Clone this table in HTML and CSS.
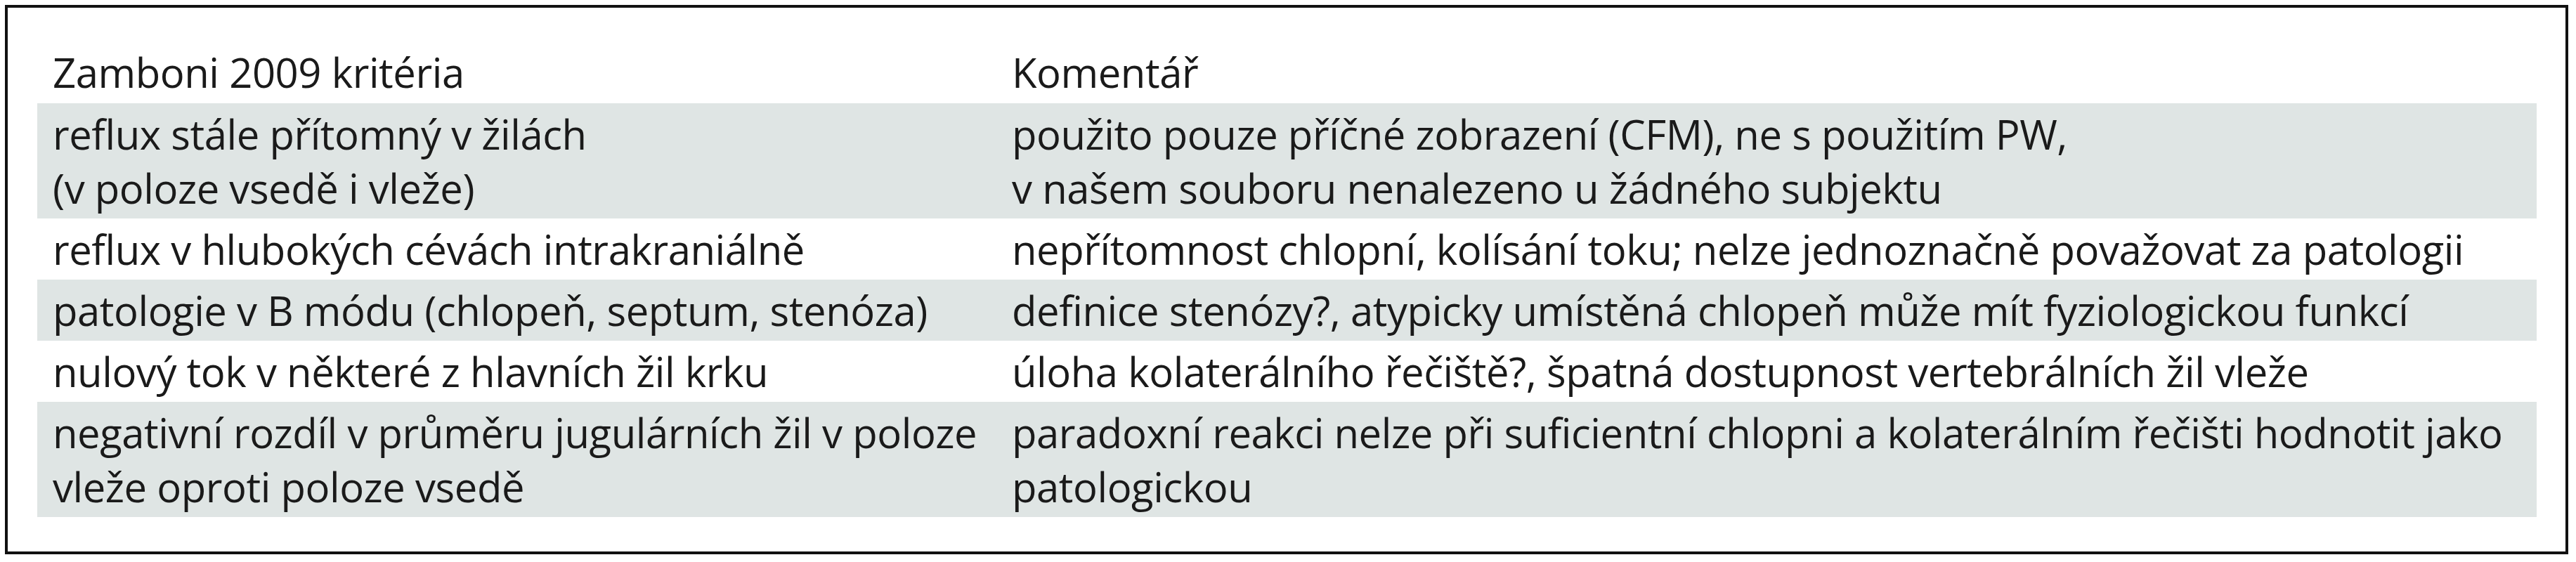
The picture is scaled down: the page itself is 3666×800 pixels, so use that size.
FILE: index.html
```html
<!DOCTYPE html>
<html lang="cs">
<head>
<meta charset="utf-8">
<title>Zamboni 2009 kritéria</title>
<link rel="stylesheet" href="styles.css">
</head>
<body>
<div class="frame">
  <table class="criteria">
    <thead>
      <tr>
        <th class="col-a">Zamboni 2009 kritéria</th>
        <th class="col-b">Komentář</th>
      </tr>
    </thead>
    <tbody>
      <tr class="shade">
        <td>reflux stále přítomný v žilách<br>(v poloze vsedě i vleže)</td>
        <td>použito pouze příčné zobrazení (CFM), ne s použitím PW,<br>v našem souboru nenalezeno u žádného subjektu</td>
      </tr>
      <tr>
        <td>reflux v hlubokých cévách intrakraniálně</td>
        <td>nepřítomnost chlopní, kolísání toku; nelze jednoznačně považovat za patologii</td>
      </tr>
      <tr class="shade">
        <td>patologie v B módu (chlopeň, septum, stenóza)</td>
        <td>definice stenózy?, atypicky umístěná chlopeň může mít fyziologickou funkcí</td>
      </tr>
      <tr>
        <td>nulový tok v některé z hlavních žil krku</td>
        <td>úloha kolaterálního řečiště?, špatná dostupnost vertebrálních žil vleže</td>
      </tr>
      <tr class="shade">
        <td>negativní rozdíl v průměru jugulárních žil v poloze<br>vleže oproti poloze vsedě</td>
        <td>paradoxní reakci nelze při suficientní chlopni a kolaterálním řečišti hodnotit jako<br>patologickou</td>
      </tr>
    </tbody>
  </table>
</div>
</body>
</html>
```

FILE: styles.css
```css
html, body {
  margin: 0;
  padding: 0;
  background: #ffffff;
}

body {
  padding: 7px 0 0 7px;
  font-family: "Open Sans", "DejaVu Sans", sans-serif;
  color: #1a1a1a;
}

.frame {
  box-sizing: border-box;
  width: 3648px;
  height: 782px;
  border: 4px solid #111111;
  padding: 47px 41px 48px 42px;
}

.criteria {
  width: 100%;
  border-collapse: collapse;
  table-layout: fixed;
  font-size: 58px;
  line-height: 77px;
  letter-spacing: -0.45px;
}

.criteria th,
.criteria td {
  text-align: left;
  font-weight: normal;
  vertical-align: top;
  white-space: nowrap;
  padding: 5px 22px 5px 22px;
}

.criteria th {
  padding-top: 6px;
  padding-bottom: 6px;
}

.col-a {
  width: 1365px;
  box-sizing: border-box;
}

.shade {
  background: #dfe5e4;
}
```
